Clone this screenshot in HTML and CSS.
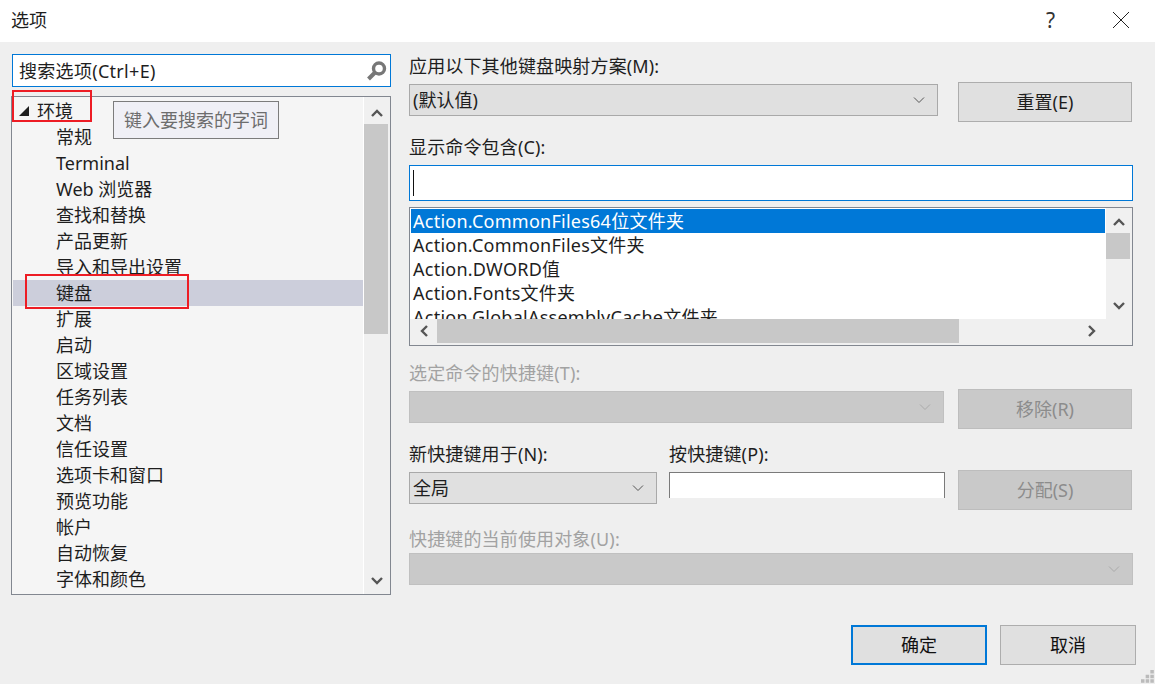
FILE: index.html
```html
<!DOCTYPE html>
<html lang="zh-CN">
<head>
<meta charset="utf-8">
<title>选项</title>
<link rel="stylesheet" href="styles.css">
</head>
<body>
<div class="dialog">
  <header class="titlebar">
    <span class="title">选项</span>
    <span class="help">?</span>
    <svg class="close" width="18" height="18" viewBox="0 0 18 18"><path d="M1 1L17 17M17 1L1 17" stroke="#222" stroke-width="1" fill="none"/></svg>
  </header>
  <main class="content">
    <section class="left">
      <div class="search">
        <span class="search-text">搜索选项(Ctrl+E)</span>
        <svg class="search-icon" width="22" height="22" viewBox="0 0 22 22"><circle cx="12" cy="8.5" r="5.5" fill="none" stroke="#777" stroke-width="3.4"/><path d="M8 12.5L1.5 19" stroke="#777" stroke-width="4" fill="none"/></svg>
      </div>
      <div class="tree">
        <div class="tree-list">
          <div class="row root"><span class="tri"></span>环境</div>
          <div class="row">常规</div>
          <div class="row">Terminal</div>
          <div class="row">Web 浏览器</div>
          <div class="row">查找和替换</div>
          <div class="row">产品更新</div>
          <div class="row">导入和导出设置</div>
          <div class="row selected">键盘</div>
          <div class="row">扩展</div>
          <div class="row">启动</div>
          <div class="row">区域设置</div>
          <div class="row">任务列表</div>
          <div class="row">文档</div>
          <div class="row">信任设置</div>
          <div class="row">选项卡和窗口</div>
          <div class="row">预览功能</div>
          <div class="row">帐户</div>
          <div class="row">自动恢复</div>
          <div class="row">字体和颜色</div>
        </div>
        <div class="vscroll tree-scroll">
          <svg class="arrow" width="14" height="10" viewBox="0 0 14 10"><path d="M2 8L7 3L12 8" fill="none" stroke="#555" stroke-width="2.4"/></svg>
          <div class="tree-thumb"></div>
          <div class="spacer"></div>
          <svg class="arrow" width="14" height="10" viewBox="0 0 14 10"><path d="M2 2L7 7L12 2" fill="none" stroke="#555" stroke-width="2.4"/></svg>
        </div>
      </div>
      <div class="tooltip">键入要搜索的字词</div>
      <div class="mark mark-root"></div>
      <div class="mark mark-key"></div>
    </section>
    <section class="right">
      <div class="label l-scheme">应用以下其他键盘映射方案(M):</div>
      <div class="line line-scheme">
        <div class="combo combo-scheme"><span>(默认值)</span><svg class="chev" width="12" height="8" viewBox="0 0 12 8"><path d="M1 1.5L6 6.5L11 1.5" fill="none" stroke="#555" stroke-width="1"/></svg></div>
        <div class="btn btn-reset">重置(E)</div>
      </div>
      <div class="label l-contains">显示命令包含(C):</div>
      <div class="input-focus"><span class="caret"></span></div>
      <div class="cmd">
        <div class="cmd-top">
          <div class="cmd-list">
            <div class="cmd-row active">Action.CommonFiles64位文件夹</div>
            <div class="cmd-row">Action.CommonFiles文件夹</div>
            <div class="cmd-row">Action.DWORD值</div>
            <div class="cmd-row">Action.Fonts文件夹</div>
            <div class="cmd-row">Action.GlobalAssemblyCache文件夹</div>
          </div>
          <div class="vscroll cmd-v">
            <svg class="arrow" width="14" height="10" viewBox="0 0 14 10"><path d="M2 8L7 3L12 8" fill="none" stroke="#555" stroke-width="2.4"/></svg>
            <div class="cmd-thumb"></div>
            <div class="spacer"></div>
            <svg class="arrow" width="14" height="10" viewBox="0 0 14 10"><path d="M2 2L7 7L12 2" fill="none" stroke="#555" stroke-width="2.4"/></svg>
          </div>
        </div>
        <div class="hscroll">
          <svg class="arrow-h" width="10" height="14" viewBox="0 0 10 14"><path d="M8 2L3 7L8 12" fill="none" stroke="#555" stroke-width="2.4"/></svg>
          <div class="h-thumb"></div>
          <svg class="arrow-h arrow-r" width="10" height="14" viewBox="0 0 10 14"><path d="M2 2L7 7L2 12" fill="none" stroke="#555" stroke-width="2.4"/></svg>
        </div>
      </div>
      <div class="label disabled l-selected">选定命令的快捷键(T):</div>
      <div class="line line-selected">
        <div class="combo combo-off combo-selected"><svg class="chev" width="12" height="8" viewBox="0 0 12 8"><path d="M1 1.5L6 6.5L11 1.5" fill="none" stroke="#aaa" stroke-width="1"/></svg></div>
        <div class="btn btn-off">移除(R)</div>
      </div>
      <div class="line line-new">
        <div class="col col-scope">
          <div class="label">新快捷键用于(N):</div>
          <div class="combo combo-scope"><span>全局</span><svg class="chev" width="12" height="8" viewBox="0 0 12 8"><path d="M1 1.5L6 6.5L11 1.5" fill="none" stroke="#555" stroke-width="1"/></svg></div>
        </div>
        <div class="col col-keys">
          <div class="label">按快捷键(P):</div>
          <div class="keys"></div>
        </div>
        <div class="btn btn-off btn-assign">分配(S)</div>
      </div>
      <div class="label disabled l-used">快捷键的当前使用对象(U):</div>
      <div class="combo combo-off combo-used"><svg class="chev" width="12" height="8" viewBox="0 0 12 8"><path d="M1 1.5L6 6.5L11 1.5" fill="none" stroke="#aaa" stroke-width="1"/></svg></div>
    </section>
  </main>
  <footer class="footer">
    <div class="btn btn-foot btn-ok">确定</div>
    <div class="btn btn-foot">取消</div>
    <svg class="grip" width="14" height="14" viewBox="0 0 12 12"><path d="M8 0h3v3H8zM4 4h3v3H4zM8 4h3v3H8zM0 8h3v3H0zM4 8h3v3H4zM8 8h3v3H8z" fill="#bbb"/></svg>
  </footer>
</div>
</body>
</html>
```

FILE: styles.css
```css
* { box-sizing: border-box; }
html, body { margin: 0; padding: 0; }
body {
  width: 1155px;
  height: 684px;
  overflow: hidden;
  background: #efefef;
  color: #1e1e1e;
  font-family: "Noto Sans", "Noto Sans CJK SC", sans-serif;
  font-size: 18px;
  line-height: 20px;
}
.dialog { display: flex; flex-direction: column; height: 684px; position: relative; }

.titlebar {
  height: 42px;
  background: #fff;
  display: flex;
  align-items: center;
  padding: 0 25px 3px 11px;
  flex: none;
}
.title { flex: 1; }
.help { margin-right: 57px; font-size: 21px; color: #333; }
.close { display: block; }

.content { display: flex; padding: 12px 22px 0 12px; flex: none; height: 583px; }

.left { width: 379px; margin-right: 18px; position: relative; flex: none; }
.search {
  height: 33px;
  background: #fff;
  border: 1px solid #0078d7;
  display: flex;
  align-items: center;
  justify-content: space-between;
  padding: 0 1px 0 6px;
}
.search-text { letter-spacing: 0.3px; }
.search-icon { display: block; }
.tree {
  height: 499px;
  margin-top: 9px;
  margin-left: -1px;
  width: 380px;
  background: #f5f5f5;
  border: 1px solid #828790;
  display: flex;
  overflow: hidden;
}
.tree-list { width: 351px; flex: none; padding-top: 1px; }
.row { height: 26px; line-height: 26px; padding-left: 44px; white-space: nowrap; }
.row.root { padding-left: 7px; display: flex; align-items: center; }
.row.selected { background: #cccedb; margin-left: 1px; padding-left: 43px; }
.tri {
  width: 0;
  height: 0;
  border-left: 10px solid transparent;
  border-bottom: 10px solid #1e1e1e;
  margin-right: 8px;
}
.vscroll { display: flex; flex-direction: column; align-items: center; }
.tree-scroll { flex: 1; background: #f0f0f0; padding: 11px 0 8px; border-left: 1px solid #fff; }
.arrow { display: block; flex: none; }
.spacer { flex: 1; }
.tree-thumb { width: 24px; height: 210px; background: #c8c8c8; margin-top: 6px; flex: none; align-self: flex-start; }

.tooltip {
  position: absolute;
  left: 101px;
  top: 47px;
  width: 166px;
  height: 38px;
  background: #f0f0f6;
  border: 1px solid #7c7c7c;
  color: #6d6d6d;
  line-height: 36px;
  text-align: center;
  white-space: nowrap;
}
.mark { position: absolute; border: 2px solid #ed1c24; }
.mark-root { left: 0; top: 36px; width: 80px; height: 32px; }
.mark-key { left: 13px; top: 220px; width: 164px; height: 35px; }

.right { width: 724px; flex: none; }
.label { height: 20px; white-space: nowrap; letter-spacing: 0.15px; }
.disabled { color: #a2a2a2; }
.l-scheme { margin-top: 2px; }
.line { display: flex; align-items: flex-start; }
.line-scheme { margin-top: 6px; }
.combo {
  height: 32px;
  background: #e0e0e0;
  border: 1px solid #a9a9a9;
  display: flex;
  align-items: center;
  justify-content: space-between;
  padding: 0 12px 0 3px;
  flex: none;
}
.combo-scheme { width: 529px; margin-top: 2px; margin-right: 20px; }
.combo-off { background: #c9c9c9; border-color: #c0c0c0; justify-content: flex-end; }
.combo-selected { width: 535px; margin-top: 2px; margin-right: 14px; }
.combo-scope { width: 248px; margin-top: 8px; }
.combo-used { width: 724px; margin-top: 4px; }
.chev { display: block; }
.btn {
  width: 174px;
  height: 40px;
  background: #e0e0e0;
  border: 1px solid #adadad;
  display: flex;
  align-items: center;
  justify-content: center;
  flex: none;
}
.btn-off { background: #c9c9c9; border-color: #bdbdbd; color: #8c8c8c; }
.l-contains { margin-top: 15px; }
.input-focus {
  height: 36px;
  margin-top: 8px;
  background: #fff;
  border: 1px solid #0078d7;
  padding: 4px 3px;
}
.caret { display: block; width: 1px; height: 26px; background: #111; }
.cmd {
  height: 139px;
  margin-top: 6px;
  background: #f0f0f0;
  border: 1px solid #828790;
  display: flex;
  flex-direction: column;
  overflow: hidden;
}
.cmd-top { display: flex; height: 111px; flex: none; }
.cmd-list { width: 696px; flex: none; background: #fff; padding-left: 1px; overflow: hidden; }
.cmd-row { height: 24px; line-height: 24px; padding-left: 2px; margin-right: 1px; white-space: nowrap; letter-spacing: 0.25px; }
.cmd-row.active { background: #0078d7; color: #fff; margin-top: 1px; }
.cmd-v { flex: 1; padding: 9px 0 8px; }
.cmd-thumb { width: 24px; height: 26px; background: #c8c8c8; margin-top: 6px; flex: none; align-self: flex-end; margin-right: 2px; }
.hscroll { height: 24px; display: flex; align-items: center; padding-left: 9px; }
.arrow-h { display: block; flex: none; }
.h-thumb { width: 522px; height: 24px; background: #c8c8c8; margin-left: 8px; flex: none; }
.arrow-r { margin-left: 128px; }
.l-selected { margin-top: 17px; }
.line-selected { margin-top: 6px; }
.line-new { margin-top: 15px; height: 66px; }
.col { flex: none; }
.col-scope { width: 260px; }
.col-keys { width: 289px; }
.btn-assign { margin-top: 26px; }
.keys {
  width: 276px;
  height: 26px;
  margin-top: 8px;
  background: #fff;
  border: 1px solid #7a7a7a;
  border-bottom: 0;
}
.l-used { margin-top: 19px; }

.footer { display: flex; position: relative; padding: 0 19px 0 851px; gap: 13px; flex: none; }
.btn-foot { width: 136px; height: 40px; color: #111; }
.btn-ok { border: 2px solid #0078d7; }
.grip { position: absolute; right: 0; top: 45px; }
```
